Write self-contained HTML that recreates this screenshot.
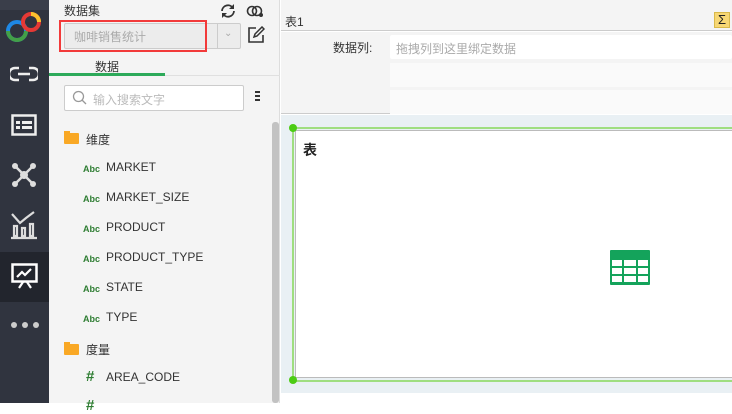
<!DOCTYPE html>
<html><head><meta charset="utf-8"><style>
*{margin:0;padding:0;box-sizing:border-box}
body{width:732px;height:403px;overflow:hidden;position:relative;font-family:"Liberation Sans","Noto Sans CJK SC",sans-serif;background:#fff}
.abs{position:absolute}
#side{left:0;top:0;width:49px;height:403px;background:#30343f}
#left{left:49px;top:0;width:231px;height:403px;background:#f4f4f4;border-right:1px solid #ddd}
.item{position:absolute;left:82px;font-size:12px;color:#333}
.abc{position:absolute;left:83px;font-size:9px;font-weight:bold;color:#2e7d32}
.fold{position:absolute;left:64px;width:15px;height:11px;background:#f9a825;border-radius:1px}
.fold:before{content:"";position:absolute;left:0;top:-2px;width:6px;height:3px;background:#f9a825}
</style></head><body>
<div id="side" class="abs">
 <div class="abs" style="left:0;top:0;width:49px;height:10px;background:#3a3e4a"></div>
 <svg class="abs" style="left:4px;top:10px" width="40" height="36" viewBox="0 0 40 36">
  <circle cx="13" cy="21" r="9" fill="none" stroke="#1e88e5" stroke-width="4"/>
  <path d="M4 21a9 9 0 0 0 18 0" fill="none" stroke="#43a047" stroke-width="4"/>
  <circle cx="27" cy="12" r="8" fill="none" stroke="#e53935" stroke-width="4"/>
  <path d="M27 4a8 8 0 0 1 8 8" fill="none" stroke="#fbc02d" stroke-width="4"/>
 </svg>
 <svg class="abs" style="left:10px;top:64px" width="28" height="20" viewBox="0 0 28 20"><path d="M9 3H5a5 5 0 0 0 0 12h4M19 3h4a5 5 0 0 1 0 12h-4M8 9h12" fill="none" stroke="#eee" stroke-width="2.5" transform="translate(0,1)"/></svg>
 <svg class="abs" style="left:11px;top:114px" width="26" height="22" viewBox="0 0 26 22"><rect x="1.5" y="1.5" width="23" height="19" fill="none" stroke="#eee" stroke-width="2.5"/><rect x="5" y="7" width="4" height="3" fill="#eee"/><rect x="5" y="12" width="4" height="3" fill="#eee"/><rect x="11" y="7" width="10" height="3" fill="#eee"/><rect x="11" y="12" width="10" height="3" fill="#eee"/></svg>
 <svg class="abs" style="left:11px;top:162px" width="26" height="26" viewBox="0 0 26 26"><g stroke="#ddd" stroke-width="2.5"><path d="M4 4L22 22M22 4L4 22"/></g><g fill="#ddd"><circle cx="13" cy="13" r="4"/><circle cx="4" cy="4" r="3"/><circle cx="22" cy="4" r="3"/><circle cx="4" cy="22" r="3"/><circle cx="22" cy="22" r="3"/></g></svg>
 <svg class="abs" style="left:10px;top:210px" width="28" height="30" viewBox="0 0 28 30"><g fill="none" stroke="#ddd" stroke-width="2.2"><path d="M2 4l8 9 6-5 8-6"/><rect x="4" y="16" width="3" height="10"/><rect x="12" y="18" width="3" height="8"/><rect x="20" y="14" width="3" height="12"/><path d="M1 28h26"/></g></svg>
 <div class="abs" style="left:0;top:252px;width:49px;height:50px;background:#22252d"></div>
 <svg class="abs" style="left:11px;top:263px" width="28" height="28" viewBox="0 0 28 28"><rect x="1.5" y="1.5" width="24" height="17" fill="none" stroke="#fff" stroke-width="2.5"/><path d="M6 14l5-5 3 3 6-6M8 25l4-6M20 25l-4-6" fill="none" stroke="#fff" stroke-width="2.2"/></svg>
 <div class="abs" style="left:11px;top:322px;width:28px;height:6px"><span class="abs" style="left:0;width:6px;height:6px;border-radius:3px;background:#ccc"></span><span class="abs" style="left:11px;width:6px;height:6px;border-radius:3px;background:#ccc"></span><span class="abs" style="left:22px;width:6px;height:6px;border-radius:3px;background:#ccc"></span></div>
</div>
<div id="left" class="abs"></div>
<div class="abs" style="left:64px;top:2px;font-size:12px;color:#333">数据集</div>
<svg class="abs" style="left:219px;top:3px" width="18" height="16" viewBox="0 0 18 16"><path d="M3 8a6 6 0 0 1 11-3M15 8a6 6 0 0 1-11 3" fill="none" stroke="#333" stroke-width="1.8"/><path d="M15 1v5h-5zM3 15v-5h5z" fill="#333"/></svg>
<svg class="abs" style="left:246px;top:4px" width="18" height="14" viewBox="0 0 18 14"><circle cx="6" cy="7" r="4.5" fill="none" stroke="#333" stroke-width="1.6"/><circle cx="11" cy="7" r="4.5" fill="none" stroke="#333" stroke-width="1.6"/><circle cx="15" cy="11" r="2" fill="#333"/></svg>
<div class="abs" style="left:64px;top:23px;width:177px;height:26px;border:1px solid #ccc;background:#ececec;border-radius:2px"></div>
<div class="abs" style="left:217px;top:24px;width:1px;height:24px;background:#ccc"></div>
<div class="abs" style="left:224px;top:28px;font-size:10px;color:#aaa">⌄</div>
<div class="abs" style="left:74px;top:28px;font-size:12px;color:#aaa">咖啡销售统计</div>
<div class="abs" style="left:59px;top:20px;width:148px;height:32px;border:2px solid #f23a3a"></div>
<svg class="abs" style="left:247px;top:26px" width="18" height="18" viewBox="0 0 18 18"><path d="M9 2H2v14h14V9" fill="none" stroke="#333" stroke-width="1.6"/><path d="M7 11l1-3 7-7 2 2-7 7z" fill="none" stroke="#333" stroke-width="1.5"/></svg>
<div class="abs" style="left:95px;top:58px;font-size:12px;color:#333">数据</div>
<div class="abs" style="left:49px;top:73px;width:116px;height:3px;background:#2daa5a"></div>
<div class="abs" style="left:165px;top:75px;width:115px;height:1px;background:#e0e0e0"></div>
<div class="abs" style="left:64px;top:85px;width:180px;height:26px;border:1px solid #ccc;background:#fff;border-radius:2px"></div>
<svg class="abs" style="left:72px;top:90px" width="16" height="16" viewBox="0 0 16 16"><circle cx="6.5" cy="6.5" r="5" fill="none" stroke="#999" stroke-width="1.3"/><path d="M10 10l4 4" stroke="#999" stroke-width="1.3"/></svg>
<div class="abs" style="left:93px;top:91px;font-size:12px;color:#bbb">输入搜索文字</div>
<div class="abs" style="left:255px;top:91px;width:5px;height:2px;background:#333;box-shadow:0 4px #333,0 8px #333"></div>
<div class="abs" style="left:272px;top:122px;width:7px;height:281px;background:#c2c2c2;border-radius:3px"></div>
<div class="fold" style="top:133px"></div><div class="item" style="left:86px;top:131px">维度</div>
<div class="abc" style="top:164px">Abc</div><div class="item" style="left:106px;top:160px">MARKET</div>
<div class="abc" style="top:194px">Abc</div><div class="item" style="left:106px;top:190px">MARKET_SIZE</div>
<div class="abc" style="top:224px">Abc</div><div class="item" style="left:106px;top:220px">PRODUCT</div>
<div class="abc" style="top:254px">Abc</div><div class="item" style="left:106px;top:250px">PRODUCT_TYPE</div>
<div class="abc" style="top:284px">Abc</div><div class="item" style="left:106px;top:280px">STATE</div>
<div class="abc" style="top:314px">Abc</div><div class="item" style="left:106px;top:310px">TYPE</div>
<div class="fold" style="top:344px"></div><div class="item" style="left:86px;top:341px">度量</div>
<div class="abs" style="left:86px;top:368px;font-size:15px;font-weight:bold;color:#2e7d32">#</div><div class="item" style="left:106px;top:370px">AREA_CODE</div>
<div class="abs" style="left:86px;top:397px;font-size:15px;font-weight:bold;color:#2e7d32">#</div>
<!-- right -->
<div class="abs" style="left:281px;top:0;width:451px;height:31px;background:#f4f4f4;border-bottom:1px solid #ccc"></div>
<div class="abs" style="left:285px;top:13px;font-size:12px;color:#333">表1</div>
<div class="abs" style="left:714px;top:12px;width:16px;height:16px;background:#f7d774;border:1px solid #d9b94a;font-size:13px;line-height:14px;text-align:center;color:#222">Σ</div>
<div class="abs" style="left:281px;top:32px;width:451px;height:82px;background:#f4f4f4;border-bottom:1px solid #ccc"></div>
<div class="abs" style="left:333px;top:39px;font-size:12px;color:#333">数据列:</div>
<div class="abs" style="left:390px;top:35px;width:342px;height:24px;background:#fff;border-radius:2px"></div>
<div class="abs" style="left:396px;top:40px;font-size:12px;color:#aaa">拖拽列到这里绑定数据</div>
<div class="abs" style="left:390px;top:63px;width:342px;height:24px;background:#fafafa"></div>
<div class="abs" style="left:390px;top:90px;width:342px;height:24px;background:#fafafa"></div>
<div class="abs" style="left:281px;top:115px;width:451px;height:278px;background:#e9f0f4"></div>
<div class="abs" style="left:292px;top:127px;width:440px;height:255px;border:2px solid #9fde80;border-right:none"></div>
<div class="abs" style="left:295px;top:130px;width:437px;height:248px;background:#fff;border:1px solid #bbb;border-right:none"></div>
<div class="abs" style="left:289px;top:124px;width:8px;height:8px;border-radius:4px;background:#4ccc14"></div>
<div class="abs" style="left:289px;top:376px;width:8px;height:8px;border-radius:4px;background:#4ccc14"></div>
<div class="abs" style="left:303px;top:140px;font-size:14px;font-weight:bold;color:#222">表</div>
<svg class="abs" style="left:610px;top:250px" width="40" height="35" viewBox="0 0 40 35"><rect x="0" y="0" width="40" height="35" rx="1" fill="#14a35b"/><g fill="#fff"><rect x="2" y="10" width="10" height="6"/><rect x="14" y="10" width="12" height="6"/><rect x="28" y="10" width="10" height="6"/><rect x="2" y="18" width="10" height="6"/><rect x="14" y="18" width="12" height="6"/><rect x="28" y="18" width="10" height="6"/><rect x="2" y="26" width="10" height="6"/><rect x="14" y="26" width="12" height="6"/><rect x="28" y="26" width="10" height="6"/></g></svg>
</body></html>
